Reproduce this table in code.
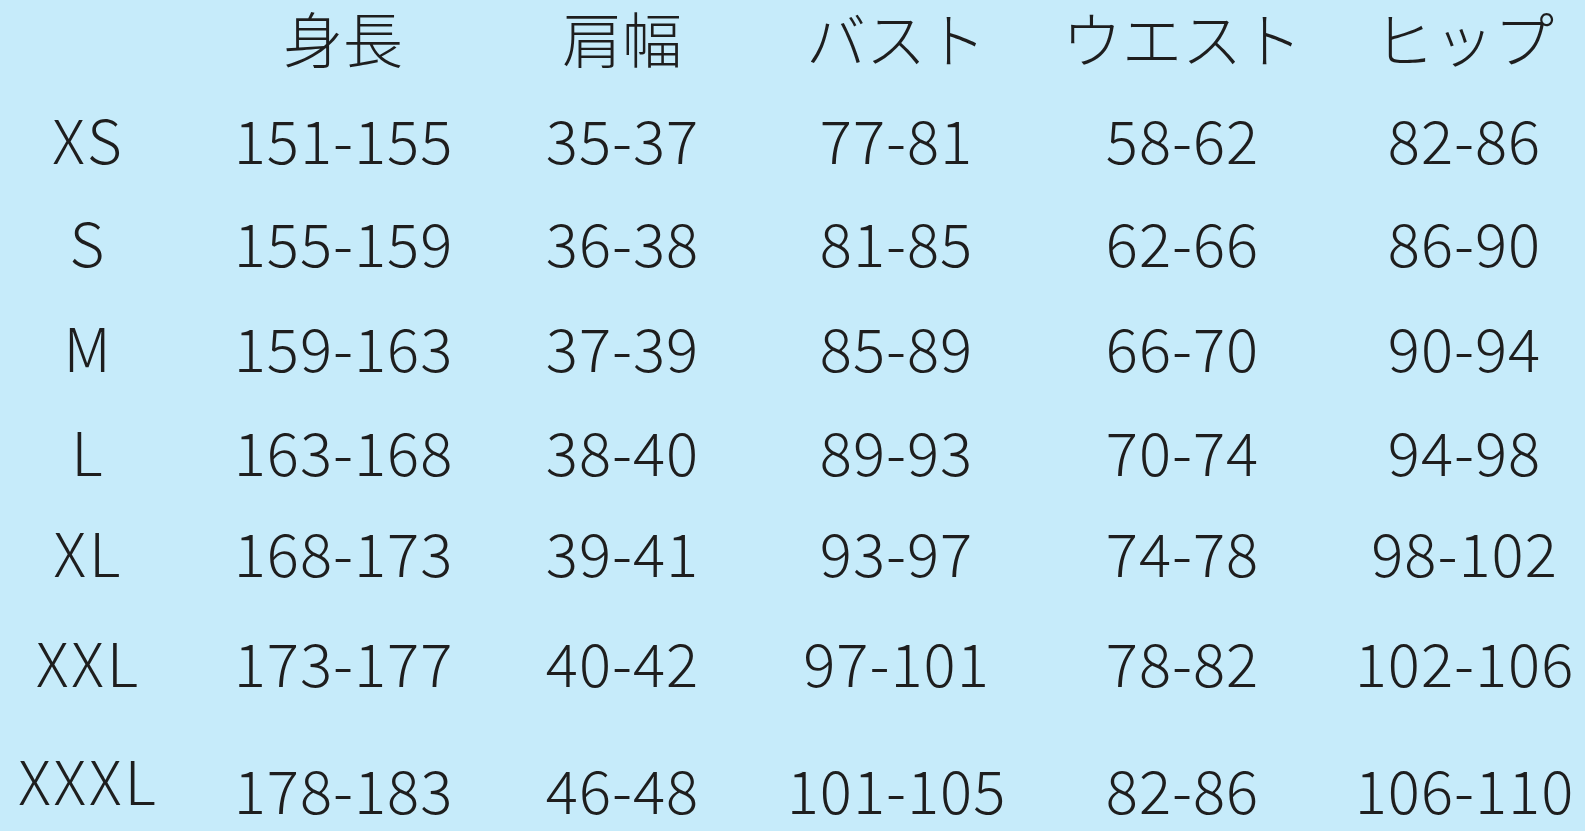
export default function App() {
  const cols = "grid grid-cols-[174px_338px_220px_328px_244px_320px] h-[60px] items-center text-center whitespace-nowrap";
  const rows = [
    { s: "XS", v: ["151-155", "35-37", "77-81", "58-62", "82-86"], mt: "mt-[41px]" },
    { s: "S", v: ["155-159", "36-38", "81-85", "62-66", "86-90"], mt: "mt-[43px]" },
    { s: "M", v: ["159-163", "37-39", "85-89", "66-70", "90-94"], mt: "mt-[45px]" },
    { s: "L", v: ["163-168", "38-40", "89-93", "70-74", "94-98"], mt: "mt-[44px]" },
    { s: "XL", v: ["168-173", "39-41", "93-97", "74-78", "98-102"], mt: "mt-[41px]" },
    { s: "XXL", v: ["173-177", "40-42", "97-101", "78-82", "102-106"], mt: "mt-[50px]" },
    { s: "XXXL", v: ["178-183", "46-48", "101-105", "82-86", "106-110"], mt: "mt-[58px]" },
  ];
  return (
    <div
      className="w-[1585px] h-[831px] overflow-hidden bg-[#c6ebfa] text-[#1e1e1e] text-[60px] leading-none font-light"
      style={{ fontFamily: '"Noto Sans CJK JP", "Noto Sans", sans-serif' }}
    >
      <div className={cols + " mt-[7px]"}>
        <div></div>
        <div>身長</div>
        <div>肩幅</div>
        <div>バスト</div>
        <div>ウエスト</div>
        <div>ヒップ</div>
      </div>
      {rows.map((r, i) => (
        <div key={r.s} className={cols + " " + r.mt}>
          <div className={"tracking-[3px] pl-[3px] " + (i === 6 ? "pb-[17px]" : "")}>{r.s}</div>
          {r.v.map((x, j) => (
            <div key={j} className="tracking-[1px] pl-[1px]">{x}</div>
          ))}
        </div>
      ))}
    </div>
  );
}
